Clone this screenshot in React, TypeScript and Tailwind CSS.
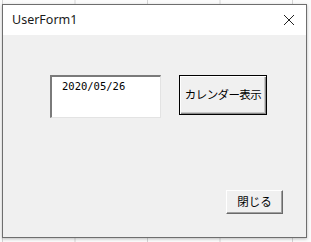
export default function App() {
  return (
    <div className="w-[311px] h-[242px] overflow-hidden bg-[#fbfbfb] bg-[linear-gradient(to_right,#d4d4d4_1px,transparent_1px)] bg-[length:72.5px_100%] bg-[position:2px_0] pt-[4px] pl-[2px]">
      <div className="w-[305px] h-[234px] flex flex-col border border-[#6e6e6e] shadow-[0_1px_3px_rgba(0,0,0,0.25)] font-['Noto_Sans_CJK_JP',sans-serif]">
        <div className="h-[30px] bg-white flex items-center justify-between pl-[9px] pr-[10px] shrink-0">
          <span className="text-[12.5px] text-[#1a1a1a] font-['Noto_Sans','Noto_Sans_CJK_JP',sans-serif]">UserForm1</span>
          <svg width="12" height="12" viewBox="0 0 12 12" className="mr-[1px]">
            <path d="M1 1 L11 11 M11 1 L1 11" stroke="#222" strokeWidth="1" fill="none" />
          </svg>
        </div>
        <div className="flex-1 bg-[#f0f0f0] flex flex-col pl-[47px] pt-[40px]">
          <div className="flex items-start gap-[18px]">
            <div className="w-[111px] h-[43px] bg-white border-t-2 border-l-2 border-t-[#7a7a7a] border-l-[#7a7a7a] border-r border-b border-r-[#e3e3e3] border-b-[#e3e3e3] pl-[10px] pt-[2px] text-[10.5px] leading-[14px] text-black font-['DejaVu_Sans_Mono','Noto_Sans_CJK_JP',monospace]">
              2020/05/26
            </div>
            <button className="w-[88px] h-[40px] border border-black bg-[#f0f0f0] shadow-[inset_1px_1px_0_#ffffff,inset_-1px_-1px_0_#8a8a8a,inset_-2px_-2px_0_#c8c8c8] text-[11.5px] tracking-[-0.6px] text-black flex items-center justify-center">
              カレンダー表示
            </button>
          </div>
          <div className="flex justify-end pr-[23px] mt-[72px]">
            <button className="w-[57px] h-[24px] bg-[#f0f0f0] border-t border-l border-t-white border-l-white border-r border-b border-r-[#6a6a6a] border-b-[#6a6a6a] shadow-[inset_-1px_-1px_0_#a0a0a0] text-[11.5px] text-black flex items-center justify-center">
              閉じる
            </button>
          </div>
        </div>
      </div>
    </div>
  );
}
